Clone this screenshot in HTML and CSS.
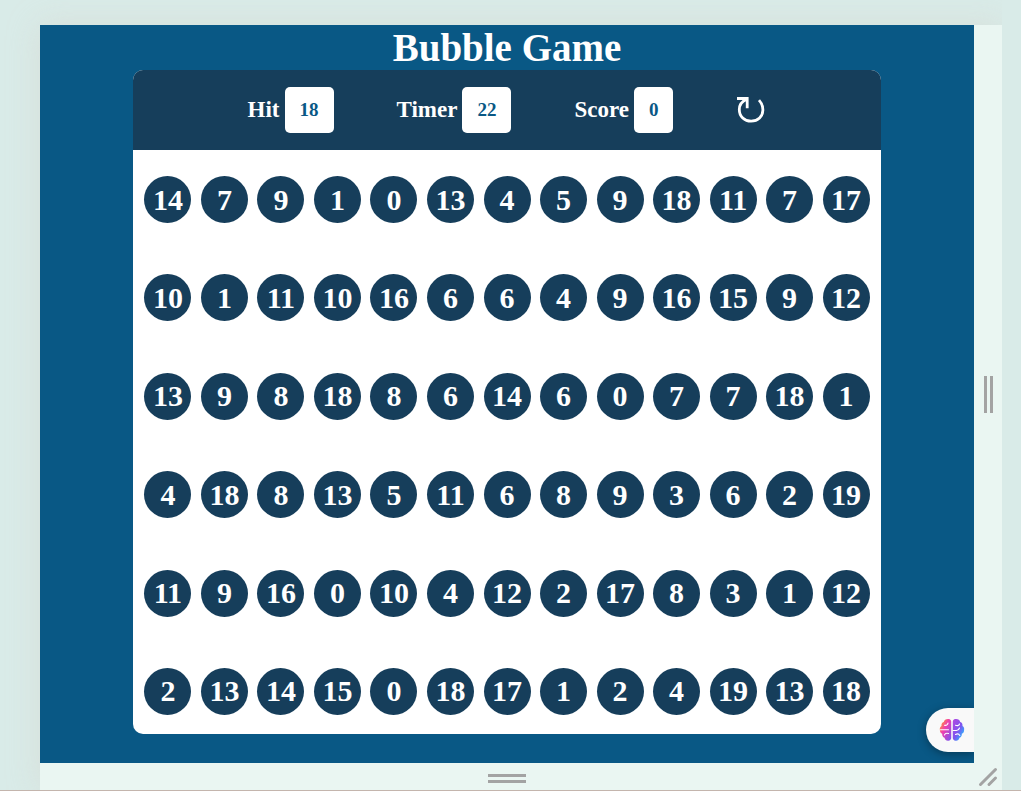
FILE: index.html
```
<!DOCTYPE html>
<html lang="en">
<head>
<meta charset="utf-8">
<title>Bubble Game</title>
<link rel="stylesheet" href="styles.css">
</head>
<body>
<div class="viewer">
  <main class="game">
    <h1 class="title">Bubble Game</h1>
    <section class="panel">
      <header class="panel-top">
        <div class="stat"><span>Hit</span><output class="value">18</output></div>
        <div class="stat"><span>Timer</span><output class="value">22</output></div>
        <div class="stat"><span>Score</span><output class="value">0</output></div>
        <button class="restart" type="button" aria-label="Restart">
          <svg width="30" height="30" viewBox="0 0 30 30" fill="none" stroke="currentColor" stroke-width="2.8">
            <path d="M1 3.500H11.200V13.200"/>
            <path d="M10.600 4.200C6.600 6 3.300 9.600 3.300 14.400C3.300 21.400 8.500 26.200 15.100 26.200C22 26.200 26.900 21.400 26.900 15C26.900 11.200 25.500 7.800 23 5.100"/>
          </svg>
        </button>
      </header>
      <div class="bubbles" id="bubbles"></div>
    </section>
    <button class="assistant" type="button" aria-label="Assistant">
      <svg width="26" height="26" viewBox="0 0 26 26">
        <defs>
          <linearGradient id="left" x1="0" y1="0" x2="1" y2="1">
            <stop offset="0" stop-color="#ff9a24"/>
            <stop offset=".15" stop-color="#ff8a40"/>
            <stop offset=".42" stop-color="#f13fae"/>
            <stop offset="1" stop-color="#7355f5"/>
          </linearGradient>
          <linearGradient id="right" x1="0" y1="0" x2="1" y2="1">
            <stop offset="0" stop-color="#b346df"/>
            <stop offset=".5" stop-color="#8054ef"/>
            <stop offset=".85" stop-color="#28b5ff"/>
          </linearGradient>
        </defs>
        <path fill="url(#left)" d="M12.200 4.500C12 2.500 10.500 2 8.900 2C6.800 2 5.100 3.300 4.800 5.100C3 5.600 2.200 7.300 2.500 9C1 10 .6 11.400 .9 13C.8 14.900 1.800 16.200 3.200 16.800C3 18.800 4 20.300 5.500 20.800C6 22.800 7.600 24 9.400 23.700C11 23.500 12.200 22.500 12.200 21Z"/>
        <path fill="url(#right)" d="M13.800 4.500C14 2.500 15.500 2 17.100 2C19.200 2 20.900 3.300 21.200 5.100C23 5.600 23.800 7.300 23.500 9C25 10 25.400 11.400 25.100 13C25.200 14.900 24.200 16.200 22.800 16.800C23 18.800 22 20.300 20.500 20.800C20 22.800 18.400 24 16.600 23.700C15 23.500 13.800 22.500 13.800 21Z"/>
        <path fill="none" stroke="#fff" stroke-width="1.100" stroke-linecap="round" d="M5.500 8.300C7.500 8.500 8.800 7.800 9 6M1.500 12.800H9.500M5.500 18C6 16.500 7.500 16 9.500 16.500M16.500 8.300C18.500 9 20 8.500 20.500 7M14 13.500H17.500C19 13.500 20 12.500 20.500 11M16.500 17.500C18.500 16.500 20 17 20.800 18.500"/>
      </svg>
    </button>
  </main>
  <div class="handle handle-side"></div>
  <div class="handle handle-bottom"></div>
  <div class="handle handle-corner">
    <svg width="20" height="20" viewBox="0 0 20 20" stroke="#a3a3a3" stroke-width="3" stroke-linecap="round">
      <path d="M2.500 17.500L17.500 2.500M11 17.500L17.500 11"/>
    </svg>
  </div>
</div>
<script src="game.js"></script>
</body>
</html>
```
FILE: styles.css
```
*,
*::before {
  box-sizing: border-box;
  margin: 0;
}

body {
  min-height: 100vh;
  display: flex;
  padding: 25px 19px 0 40px;
  border-bottom: 1px solid #c4b5ad;
  background: #d9ebe8;
  font-family: "Liberation Serif", "Times New Roman", serif;
}

.viewer {
  flex: 1;
  display: grid;
  grid-template-columns: 1fr 28px;
  grid-template-rows: 1fr 27px;
  background: #eaf6f2;
  box-shadow: 0 0 30px rgba(216, 204, 194, 0.4);
  clip-path: inset(-25px 0 0 -40px);
}

.game {
  position: relative;
  display: flex;
  flex-direction: column;
  align-items: center;
  padding-bottom: 29px;
  background: #095885;
  overflow: hidden;
}

.title {
  padding-top: 1px;
  color: #fff;
  font-size: 39px;
  line-height: 44px;
}

.panel {
  flex: 1;
  width: 80%;
  display: flex;
  flex-direction: column;
  border-radius: 10px;
  background: #fff;
  overflow: hidden;
}

.panel-top {
  display: flex;
  align-items: center;
  justify-content: center;
  gap: 63px;
  height: 80px;
  background: #163e5b;
  color: #fff;
}

.stat {
  display: flex;
  align-items: center;
  gap: 5px;
  font-size: 23px;
  font-weight: 700;
}

.value {
  padding: 0 15px;
  border-radius: 5px;
  background: #fff;
  color: #095885;
  font-size: 19px;
  line-height: 46px;
}

.restart {
  display: flex;
  padding: 0;
  border: 0;
  background: none;
  color: #fff;
}

.bubbles {
  flex: 1;
  display: grid;
  grid-template-columns: repeat(13, 47px);
  justify-content: space-between;
  align-content: space-between;
  padding: 26px 11px 19px;
}

.bubble {
  width: 47px;
  height: 47px;
  padding: 0;
  border: 0;
  border-radius: 50%;
  background: #163e5b;
  color: #fff;
  font: 700 30px "Liberation Serif", "Times New Roman", serif;
}

.assistant {
  position: absolute;
  right: 0;
  bottom: 11px;
  display: flex;
  align-items: center;
  width: 48px;
  height: 44px;
  padding: 0 0 0 13px;
  border: 0;
  border-radius: 22px 0 0 22px;
  background: #f9f9f9;
  box-shadow: 0 2px 8px rgba(0, 0, 0, 0.35);
}

.handle {
  display: flex;
  align-items: center;
  justify-content: center;
}

.handle-side::before {
  content: "";
  width: 9px;
  height: 37px;
  border: solid #a3a3a3;
  border-width: 0 3px;
}

.handle-bottom {
  padding-top: 3px;
}

.handle-bottom::before {
  content: "";
  width: 38px;
  height: 9px;
  border: solid #a3a3a3;
  border-width: 3px 0;
}
```
FILE: game.js
```
const rows = [
  [14, 7, 9, 1, 0, 13, 4, 5, 9, 18, 11, 7, 17],
  [10, 1, 11, 10, 16, 6, 6, 4, 9, 16, 15, 9, 12],
  [13, 9, 8, 18, 8, 6, 14, 6, 0, 7, 7, 18, 1],
  [4, 18, 8, 13, 5, 11, 6, 8, 9, 3, 6, 2, 19],
  [11, 9, 16, 0, 10, 4, 12, 2, 17, 8, 3, 1, 12],
  [2, 13, 14, 15, 0, 18, 17, 1, 2, 4, 19, 13, 18]
];

const board = document.getElementById("bubbles");
for (const number of rows.flat()) {
  const bubble = document.createElement("button");
  bubble.type = "button";
  bubble.className = "bubble";
  bubble.textContent = number;
  board.append(bubble);
}
```
